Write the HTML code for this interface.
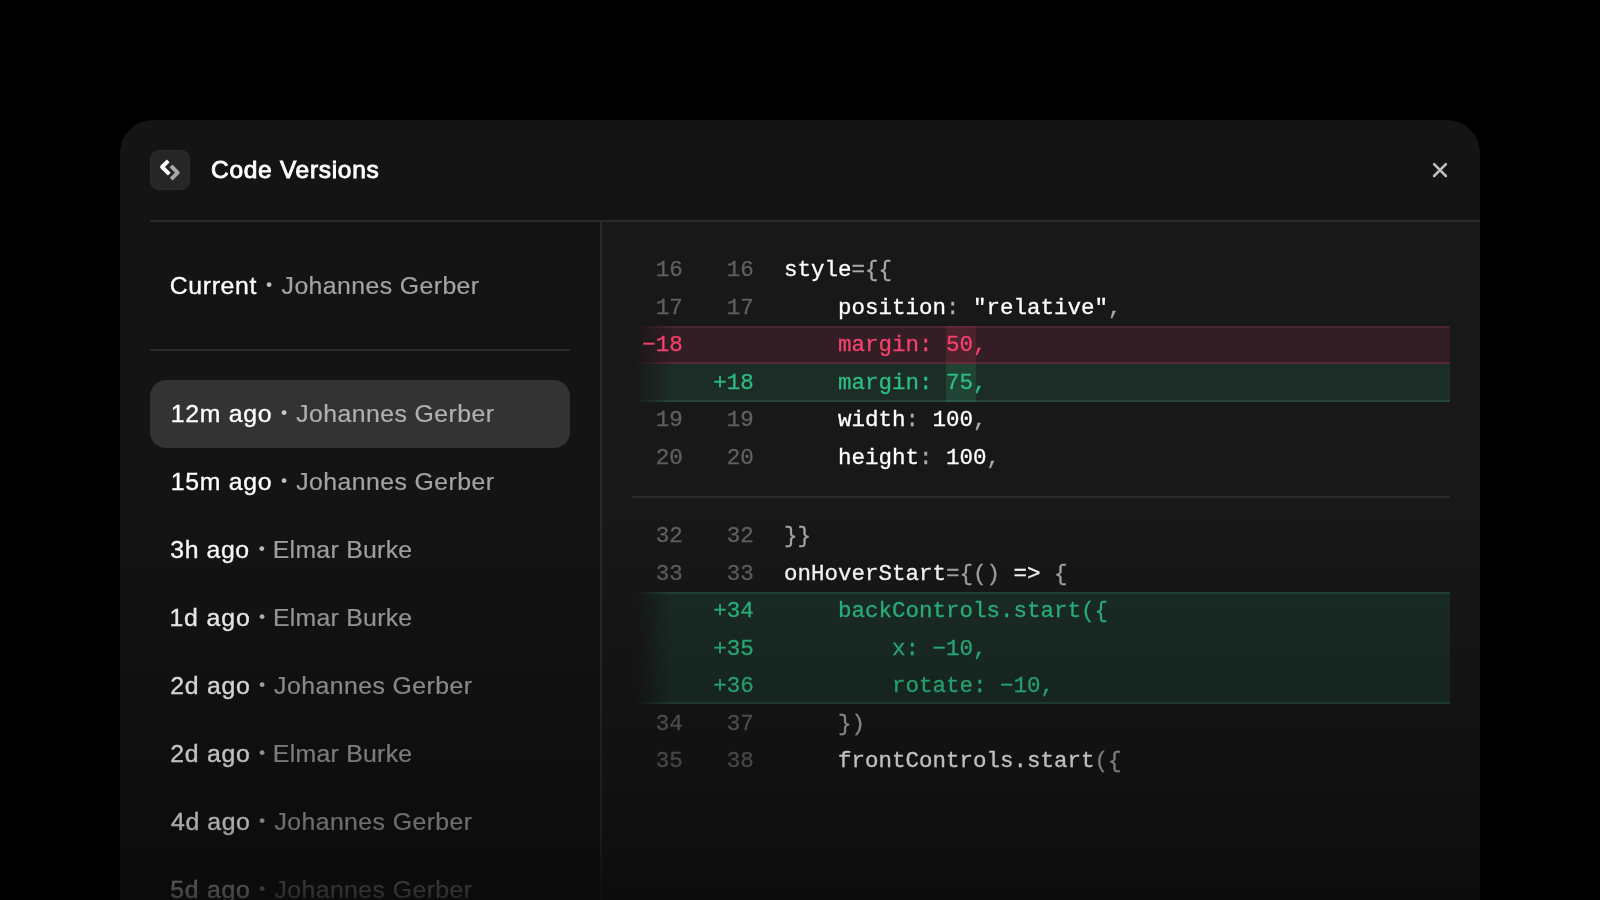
<!DOCTYPE html>
<html lang="en">
<head>
<meta charset="utf-8">
<title>Code Versions</title>
<style>
*{box-sizing:border-box;margin:0;padding:0}
html,body{width:1600px;height:900px;overflow:hidden;background:#000}
body{position:relative;font-family:"Liberation Sans",sans-serif;-webkit-font-smoothing:antialiased}
.dialog{position:absolute;left:120px;top:120px;width:1360px;height:800px;background:#141414;border-radius:33px 33px 0 0;overflow:hidden}
.hicon{position:absolute;left:30px;top:30px;width:40px;height:40px;border-radius:9px;background:#262626;box-shadow:inset 0 0 0 1px rgba(255,255,255,.035)}
.hicon svg{position:absolute;left:0;top:0}
.title{letter-spacing:.7px;position:absolute;left:90.7px;top:33px;height:34px;line-height:34px;font-size:24.5px;font-weight:400;-webkit-text-stroke:.9px #fff;color:#fff;white-space:nowrap}
.close{position:absolute;left:1300px;top:30px;width:40px;height:40px}
.hline{position:absolute;left:30px;top:100px;width:1330px;height:2px;background:#2a2a2a}
.vline{position:absolute;left:480px;top:100px;width:2px;height:700px;background:#2a2a2a}
.codepane{position:absolute;left:482px;top:102px;width:878px;height:698px;background:#181818}
.cline{position:absolute;left:30px;top:229px;width:420px;height:2px;background:#2a2a2a}
.sel{position:absolute;left:30px;top:260px;width:420px;height:68px;border-radius:16px;background:#333}
.item{position:absolute;left:0;width:480px;height:34px;line-height:34px;font-size:24.8px;white-space:nowrap;color:#fff}
.item .t,.item .n,.item .d{position:absolute;top:0;left:0}
.item .t{font-weight:400;color:#fff;-webkit-text-stroke:.35px #fff}
.item .n{font-style:normal;color:#a3a3a3;-webkit-text-stroke:.2px}
.item .d{font-family:"Liberation Serif",serif;text-decoration:none;width:20px;text-align:center;font-size:41px;line-height:34px;top:-2px;color:#bebebe}
.sel-item .n{color:#b0b0b0}
.sel-item .d{color:#c8c8c8}
.code{position:absolute;left:0;top:0;width:1360px;height:800px;font-family:"Liberation Mono",monospace;font-size:22.5px;line-height:37.5px;color:#fff;-webkit-text-stroke:.3px}
.row{position:absolute;left:512px;width:818px;height:37.5px;white-space:pre}
.row .a{position:absolute;top:1.4px;left:0;width:50.8px;text-align:right;color:#606060}
.row .b{position:absolute;top:1.4px;left:60px;width:61.7px;text-align:right;color:#606060}
.row .c{position:absolute;top:1.4px;left:152px}
.row .p{color:#a8a8a8}
.bg{position:absolute;left:512px;width:818px;-webkit-mask-image:linear-gradient(90deg,rgba(0,0,0,0) 2px,#000 40px);mask-image:linear-gradient(90deg,rgba(0,0,0,0) 2px,#000 40px)}
.bg-del{top:206px;height:38px;background:linear-gradient(#4a2430,#4a2430) top/100% 2px no-repeat,linear-gradient(#562836,#562836) bottom/100% 2px no-repeat,#321e24}
.bg-add1{top:244px;height:38px;background:linear-gradient(#25473b,#25473b) bottom/100% 2px no-repeat,#1c2d27}
.bg-add2{top:472px;height:112px;background:linear-gradient(#25473b,#25473b) top/100% 2px no-repeat,linear-gradient(#25473b,#25473b) bottom/100% 2px no-repeat,#1c2d27}
.del .a,.del .c{color:#f4426c}
.add .b,.add .c{color:#2dbd85}
.hl{position:absolute;left:825.7px;width:30.3px;height:38px}
.hd{top:206px;background:rgba(255,60,110,.13)}
.ha{top:244px;background:rgba(70,220,160,.125)}
.title,.item,.code{will-change:transform}
.hunkline{position:absolute;left:512px;top:376px;width:818px;height:2px;background:#2a2a2a}
.fade{position:absolute;left:0;top:400px;width:1360px;height:380px;background:linear-gradient(180deg,rgba(0,0,0,0) 0,rgba(0,0,0,.19) 50%,rgba(0,0,0,.42) 100%)}
.fade2{position:absolute;left:0;top:705px;width:1360px;height:75px;background:linear-gradient(180deg,rgba(20,20,20,0) 0,rgba(20,20,20,.64) 100%)}
</style>
</head>
<body>
<div class="dialog">
  <div class="codepane"></div>
  <div class="hicon">
    <svg width="40" height="40" viewBox="0 0 40 40" fill="none">
      <path d="M18.2 10.9 L12.1 17 L19.3 24.2" stroke="#ffffff" stroke-width="3.9" stroke-linejoin="round"/>
      <path d="M21 16 L27.7 22.7 L21.2 29.2" stroke="#a8a8a8" stroke-width="3.9" stroke-linejoin="round"/>
    </svg>
  </div>
  <div class="title">Code Versions</div>
  <div class="close">
    <svg width="40" height="40" viewBox="0 0 40 40" fill="none">
      <path d="M14.1 14.2 L25.9 26 M25.9 14.2 L14.1 26" stroke="#bdbdbd" stroke-width="2.6" stroke-linecap="round"/>
    </svg>
  </div>
  <div class="hline"></div>
  <div class="vline"></div>
  <div class="cline"></div>
  <div class="sel"></div>

  <div class="item" id="r0" style="top:149px"><span class="t" style="left:49.77px;letter-spacing:0.645px">Current</span><span class="d" style="left:139.0px">·</span><span class="n" style="left:161.6px;letter-spacing:0.419px">Johannes Gerber</span></div>
  <div class="item sel-item" id="r1" style="top:277px"><span class="t" style="left:50.7px;letter-spacing:0.72px">12m ago</span><span class="d" style="left:154.0px">·</span><span class="n" style="left:176.21px;letter-spacing:0.44px">Johannes Gerber</span></div>
  <div class="item" id="r2" style="top:345px"><span class="t" style="left:50.7px;letter-spacing:0.72px">15m ago</span><span class="d" style="left:154.0px">·</span><span class="n" style="left:176.2px;letter-spacing:0.441px">Johannes Gerber</span></div>
  <div class="item" id="r3" style="top:413px"><span class="t" style="left:50.3px;letter-spacing:0.586px">3h ago</span><span class="d" style="left:131.8px">·</span><span class="n" style="left:152.75px;letter-spacing:0.297px">Elmar Burke</span></div>
  <div class="item" id="r4" style="top:481px"><span class="t" style="left:49.46px;letter-spacing:0.874px">1d ago</span><span class="d" style="left:132.0px">·</span><span class="n" style="left:152.95px;letter-spacing:0.277px">Elmar Burke</span></div>
  <div class="item" id="r5" style="top:549px"><span class="t" style="left:50.2px;letter-spacing:0.767px">2d ago</span><span class="d" style="left:132.0px">·</span><span class="n" style="left:154.1px;letter-spacing:0.455px">Johannes Gerber</span></div>
  <div class="item" id="r6" style="top:617px"><span class="t" style="left:50.2px;letter-spacing:0.767px">2d ago</span><span class="d" style="left:132.0px">·</span><span class="n" style="left:152.85px;letter-spacing:0.287px">Elmar Burke</span></div>
  <div class="item" id="r7" style="top:685px"><span class="t" style="left:51.07px;letter-spacing:0.593px">4d ago</span><span class="d" style="left:132.0px">·</span><span class="n" style="left:154.4px;letter-spacing:0.434px">Johannes Gerber</span></div>
  <div class="item" id="r8" style="top:753px"><span class="t" style="left:50.29px;letter-spacing:0.749px">5d ago</span><span class="d" style="left:132.0px">·</span><span class="n" style="left:154.4px;letter-spacing:0.434px">Johannes Gerber</span></div>

  <div class="code">
    <div class="bg bg-del"></div><div class="bg bg-add1"></div><div class="bg bg-add2"></div>
    <div class="hl hd"></div><div class="hl ha"></div>
    <div class="row" style="top:131px"><span class="a">16</span><span class="b">16</span><span class="c">style<span class="p">={{</span></span></div>
    <div class="row" style="top:168.5px"><span class="a">17</span><span class="b">17</span><span class="c">    position<span class="p">:</span> "relative"<span class="p">,</span></span></div>
    <div class="row del" style="top:206px"><span class="a">−18</span><span class="c">    margin: 50,</span></div>
    <div class="row add last" style="top:243.5px"><span class="b">+18</span><span class="c">    margin: 75,</span></div>
    <div class="row" style="top:281px"><span class="a">19</span><span class="b">19</span><span class="c">    width<span class="p">:</span> 100<span class="p">,</span></span></div>
    <div class="row" style="top:318.5px"><span class="a">20</span><span class="b">20</span><span class="c">    height<span class="p">:</span> 100<span class="p">,</span></span></div>
    <div class="hunkline"></div>
    <div class="row" style="top:397px"><span class="a">32</span><span class="b">32</span><span class="c"><span class="p">}}</span></span></div>
    <div class="row" style="top:434.5px"><span class="a">33</span><span class="b">33</span><span class="c">onHoverStart<span class="p">={()</span> =&gt; <span class="p">{</span></span></div>
    <div class="row add addtop" style="top:472px"><span class="b">+34</span><span class="c">    backControls.start({</span></div>
    <div class="row add" style="top:509.5px"><span class="b">+35</span><span class="c">        x: −10,</span></div>
    <div class="row add last" style="top:547px"><span class="b">+36</span><span class="c">        rotate: −10,</span></div>
    <div class="row" style="top:584.5px"><span class="a">34</span><span class="b">37</span><span class="c">    <span class="p">})</span></span></div>
    <div class="row" style="top:622px"><span class="a">35</span><span class="b">38</span><span class="c">    frontControls.start<span class="p">({</span></span></div>
  </div>
  <div class="fade2"></div>
  <div class="fade"></div>
</div>
</body>
</html>
